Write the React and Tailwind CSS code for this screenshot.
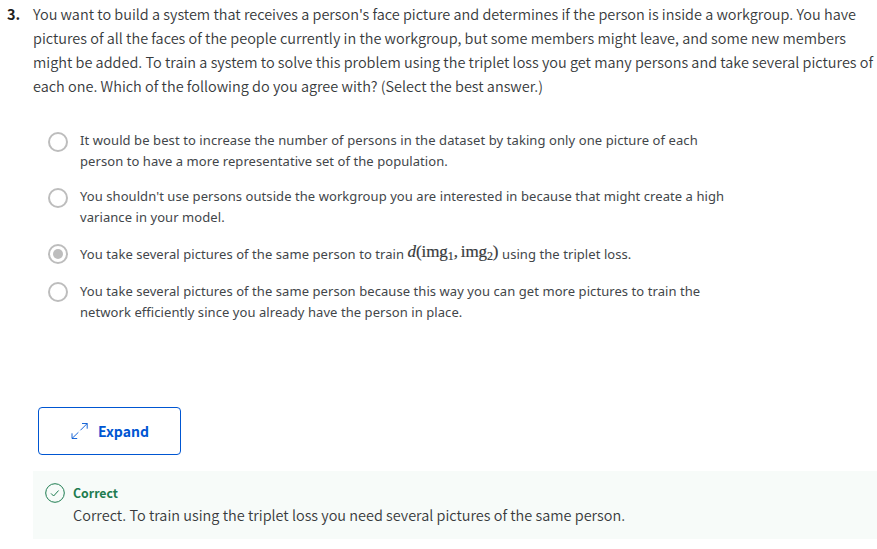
const question = [
  "You want to build a system that receives a person's face picture and determines if the person is inside a workgroup. You have",
  'pictures of all the faces of the people currently in the workgroup, but some members might leave, and some new members',
  'might be added. To train a system to solve this problem using the triplet loss you get many persons and take several pictures of',
  'each one. Which of the following do you agree with? (Select the best answer.)',
];

function Radio({ checked }) {
  return (
    <span className="mt-[2px] flex size-5 shrink-0 items-center justify-center rounded-full border-2 border-[#bdbdbd]">
      {checked && <span className="size-[10px] rounded-full bg-[#bdbdbd]" />}
    </span>
  );
}

function Option({ checked, children }) {
  return (
    <li className="flex gap-3">
      <Radio checked={checked} />
      <div className="whitespace-nowrap font-['Noto_Sans',sans-serif] text-[13px] leading-[21px] tracking-[0.068px] text-[#42464a]">
        {children}
      </div>
    </li>
  );
}

function Formula() {
  return (
    <span className="-mt-[3px] inline-block h-[21px] w-[91px] align-top font-['Liberation_Serif',serif] text-[17px] leading-[21px] tracking-[-0.1px] text-[#373a3c] [-webkit-text-stroke:0.2px]">
      <i>d</i>(img<sub className="bottom-[-3px] text-[12px]">1</sub>,<span className="ml-[3px]">img</span>
      <sub className="bottom-[-3px] text-[12px]">2</sub>)
    </span>
  );
}

export default function App() {
  return (
    <main className="h-[549px] w-[877px] overflow-hidden bg-white font-['Noto_Sans_CJK_SC',sans-serif] text-[#373a3c]">
      <div className="flex pt-[2px]">
        <b className="w-[33px] shrink-0 pl-[7px] text-[14.5px] leading-6 text-[#1f1f1f]">3.</b>
        <div className="text-[14.48px] leading-6 font-[350] whitespace-nowrap">
          {question.map((line) => (
            <p key={line}>{line}</p>
          ))}
        </div>
      </div>

      <ul className="mt-8 flex flex-col pl-12">
        <Option>
          <p className="tracking-[0.088px]">It would be best to increase the number of persons in the dataset by taking only one picture of each</p>
          <p className="mb-[14px]">person to have a more representative set of the population.</p>
        </Option>
        <Option>
          <p>You shouldn't use persons outside the workgroup you are interested in because that might create a high</p>
          <p className="mb-[14px]">variance in your model.</p>
        </Option>
        <Option checked>
          <p className="mt-[2px] mb-[15px]">
            You take several pictures of the same person to train <Formula /> using the triplet loss.
          </p>
        </Option>
        <Option>
          <p className="mt-px">You take several pictures of the same person because this way you can get more pictures to train the</p>
          <p>network efficiently since you already have the person in place.</p>
        </Option>
      </ul>

      <button className="mt-[84px] ml-[38px] flex h-12 w-[143px] items-center rounded-[4px] border border-[#0056d2] pl-[31px] text-[14px] font-bold text-[#0056d2]">
        <svg className="mr-2 size-5" viewBox="0 0 20 20" fill="none" stroke="currentColor" strokeWidth="0.9">
          <path d="M2 17.5 8.4 11.3M10.4 9.3 17.2 2.5M12 2.5h5.2v5.2M2 12.3v5.2h5.2" />
        </svg>
        <span>Expand</span>
      </button>

      <section className="mt-4 ml-[33px] flex h-[68px] bg-[#f7fbf9] pt-3 pl-3">
        <svg className="mr-2 size-5 shrink-0" viewBox="0 0 20 20" fill="none" stroke="#1d7c50">
          <circle cx="10" cy="10" r="9.3" />
          <path d="m6 10.4 2.6 2.6 5-5.5" />
        </svg>
        <div className="whitespace-nowrap">
          <h2 className="text-[12.3px] leading-5 font-bold text-[#1d7c50]">Correct</h2>
          <p className="text-[14.48px] leading-6 font-[350]">Correct. To train using the triplet loss you need several pictures of the same person.</p>
        </div>
      </section>
    </main>
  );
}
